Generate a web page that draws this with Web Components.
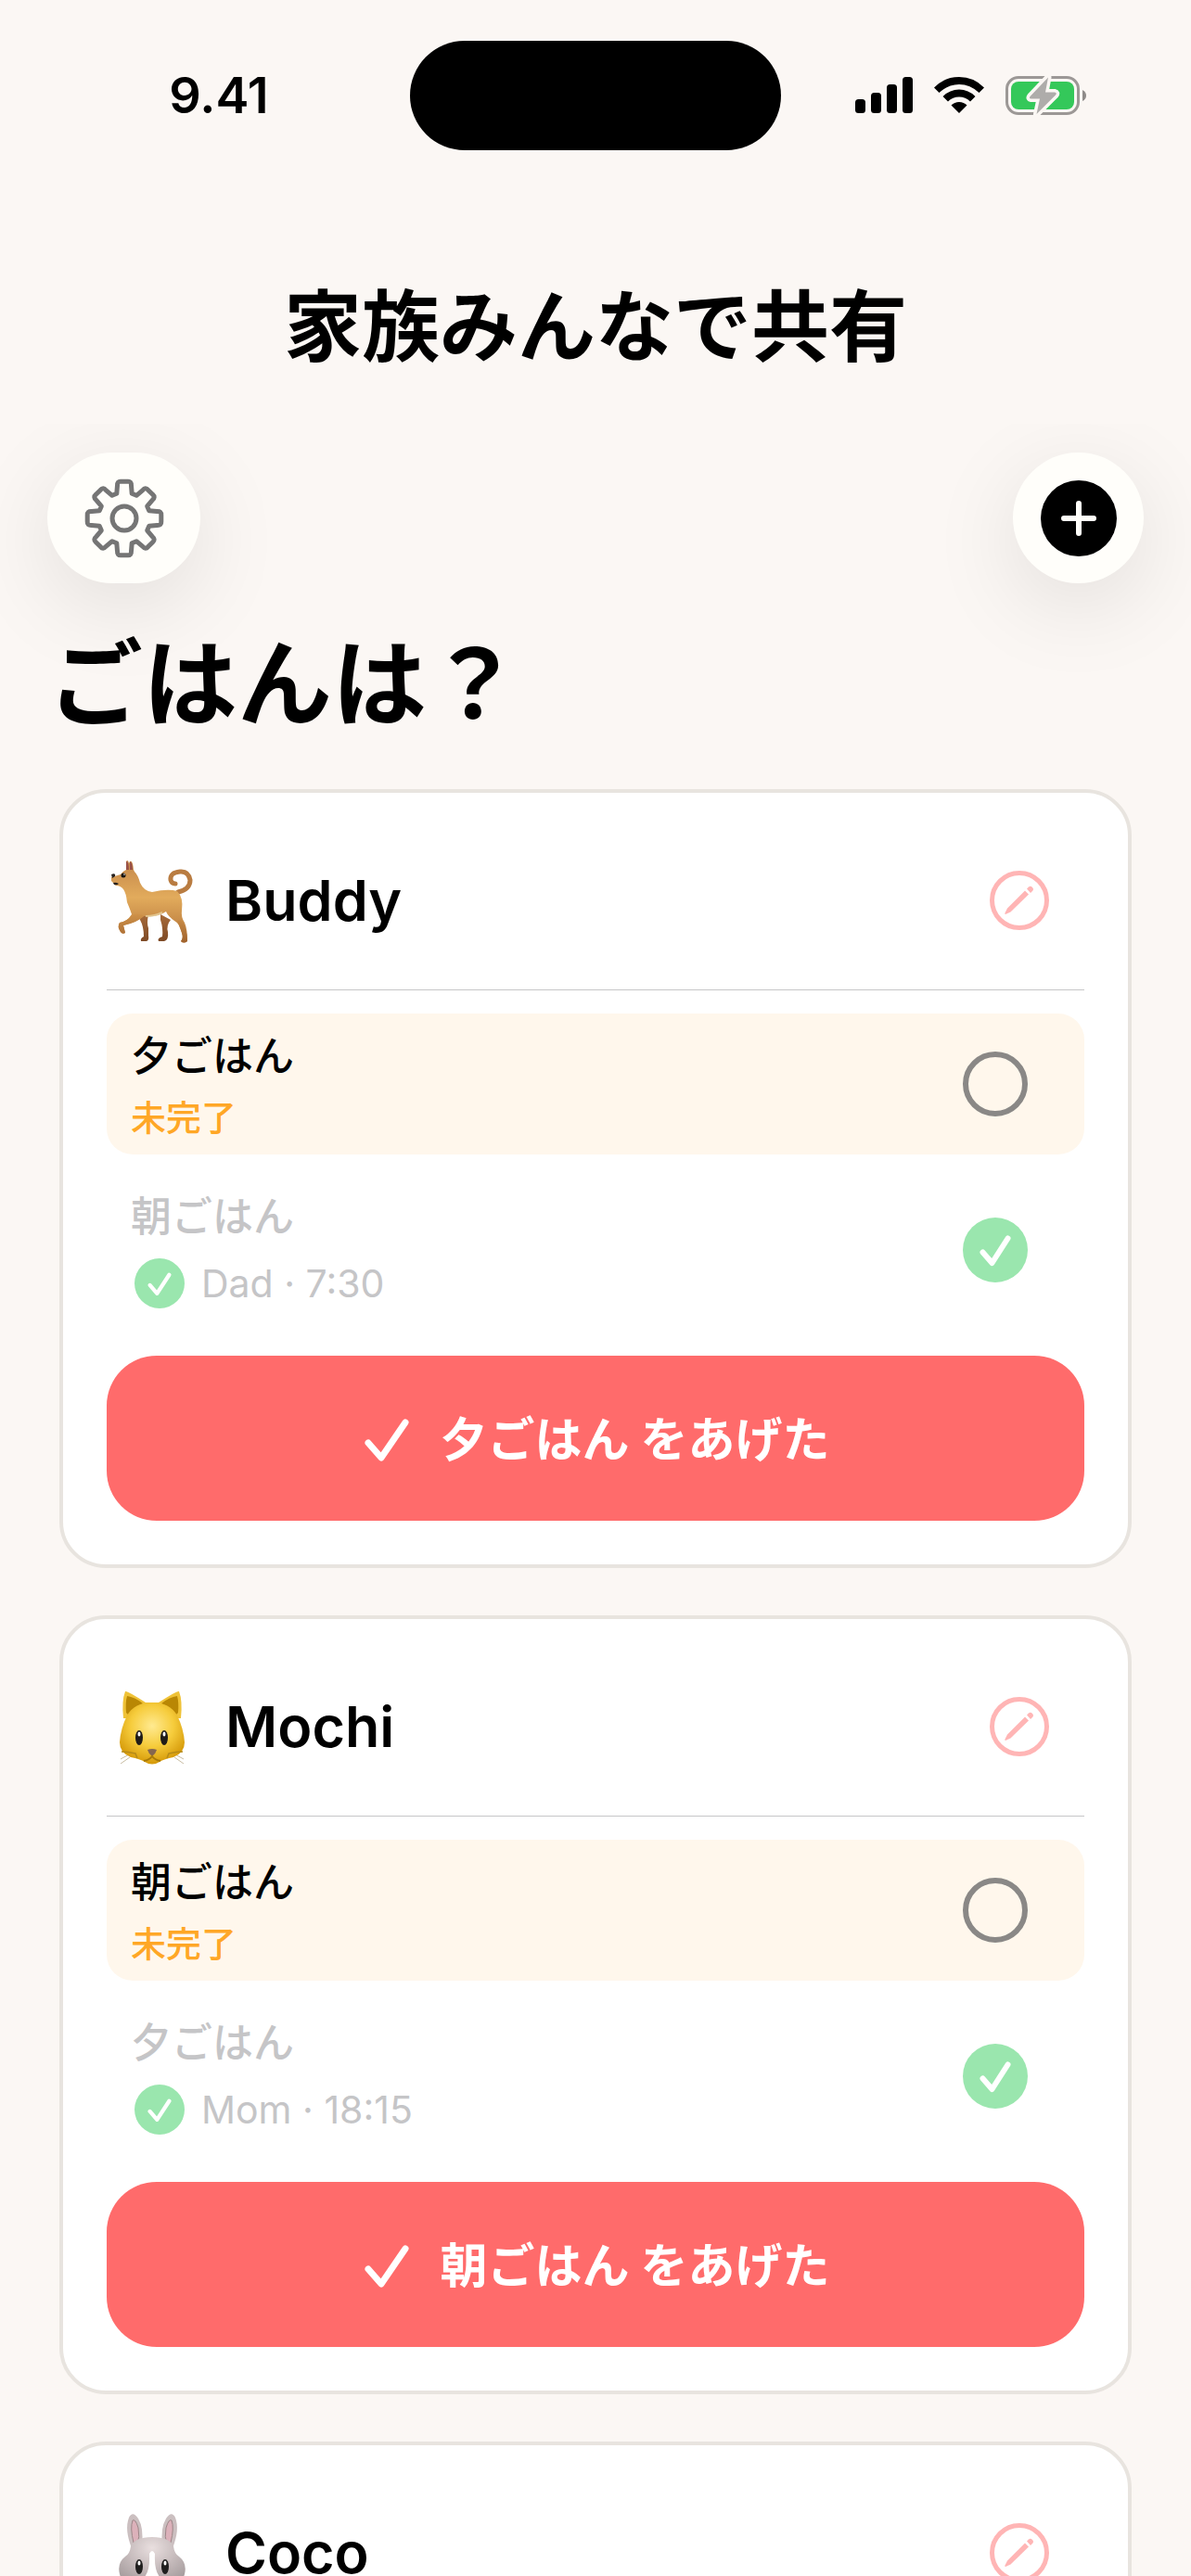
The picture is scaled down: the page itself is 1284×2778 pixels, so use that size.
<!DOCTYPE html>
<html lang="ja">
<head>
<meta charset="utf-8">
<meta name="viewport" content="width=device-width, initial-scale=1">
<title>ごはんは？</title>
<style>
:root {
    --bg: #fbf7f4;
    --coral: #ff6b6b;
    --coral-soft: #ffb5b5;
    --green-soft: #9ae6ae;
    --muted: #c5c5c7;
    --amber: #ffa726;
}
html, body { height: 100%; }
body {
    margin: 0;
    background: var(--bg);
    color: #000;
    font-family: Inter, "Noto Sans CJK JP", sans-serif;
}
</style>
</head>
<body>
<app-screen>
    <status-bar slot="status" time="9.41"></status-bar>
    <span slot="tagline">家族みんなで共有</span>
    <tool-bar></tool-bar>
    <page-title>ごはんは？</page-title>
    <pet-card name="Buddy" due="夕ごはん">
        <pet-icon slot="icon" kind="dog"></pet-icon>
        <meal-row meal="夕ごはん">未完了</meal-row>
        <meal-row meal="朝ごはん" done>Dad · 7:30</meal-row>
    </pet-card>
    <pet-card name="Mochi" due="朝ごはん">
        <pet-icon slot="icon" kind="cat"></pet-icon>
        <meal-row meal="朝ごはん">未完了</meal-row>
        <meal-row meal="夕ごはん" done>Mom · 18:15</meal-row>
    </pet-card>
    <pet-card name="Coco">
        <pet-icon slot="icon" kind="rabbit"></pet-icon>
    </pet-card>
</app-screen>

<script>
{
const define = (name, render) => customElements.define(name, class extends HTMLElement {
    constructor() {
        super();
        this.attachShadow({ mode: 'open' });
    }
    connectedCallback() {
        this.shadowRoot.innerHTML = render(this);
    }
});

// eight teeth around the centre of a 90x90 box
function gearPath() {
    const at = (r, deg) => {
        const a = (deg - 90) * Math.PI / 180;
        return (45 + r * Math.cos(a)).toFixed(1) + ' ' + (45 + r * Math.sin(a)).toFixed(1);
    };
    let d = '';
    for (let t = 0; t < 360; t += 45) {
        d += (t ? 'L' : 'M') + at(28, t - 17)
            + 'L' + at(36, t - 12)
            + 'Q' + at(41, t - 11) + ' ' + at(40, t - 5)
            + 'L' + at(40, t + 5)
            + 'Q' + at(41, t + 11) + ' ' + at(36, t + 12)
            + 'L' + at(28, t + 17);
    }
    return d + 'Z';
}

define('app-screen', () => `
    <style>
        :host { display: flex; flex-direction: column; height: 100%; overflow: hidden; }
        .tagline {
            margin: 141px 0 54px;
            font-size: 84px; line-height: 100px; font-weight: 700; text-align: center;
        }
        main {
            flex: 1; min-height: 0; overflow-y: auto; scrollbar-width: none;
            display: flex; flex-direction: column;
        }
        ::slotted(pet-card) { margin: 0 64px 51px; flex: none; }
    </style>
    <slot name="status"></slot>
    <p class="tagline"><slot name="tagline"></slot></p>
    <main><slot></slot></main>
`);

define('status-bar', el => `
    <style>
        :host { display: grid; grid-template-columns: 1fr 400px 1fr; align-items: center; padding-top: 44px; }
        time { padding-left: 30px; font-size: 54px; line-height: 60px; font-weight: 600; text-align: center; }
        .island { height: 118px; border-radius: 59px; background: #000; }
        .icons { display: flex; align-items: center; justify-content: flex-end; gap: 23px; padding-right: 112px; }
        svg { display: block; }
    </style>
    <time>${el.getAttribute('time')}</time>
    <div class="island"></div>
    <div class="icons">
        <svg width="62" height="40" viewBox="0 0 62 40">
            <rect x="0" y="24" width="11" height="15" rx="3.5"/>
            <rect x="17" y="17" width="11" height="22" rx="3.5"/>
            <rect x="34" y="8" width="11" height="31" rx="3.5"/>
            <rect x="51" y="0" width="11" height="39" rx="3.5"/>
        </svg>
        <svg width="54" height="40" viewBox="0 0 54 40">
            <path d="M0 11.500Q11 0 27 0T54 11.500L48.500 17Q39 8 27 8T5.500 17Z"/>
            <path d="M9.500 21Q17 13.500 27 13.500T44.500 21L39 26.500Q34 21.500 27 21.500T15 26.500Z"/>
            <path d="M18.500 30.500Q22 27 27 27T35.500 30.500L27 39Z"/>
        </svg>
        <svg width="88" height="44" viewBox="0 0 88 44">
            <rect x="1.500" y="2.500" width="77" height="39" rx="12.500" fill="none" stroke="#9c9896" stroke-width="3"/>
            <rect x="6" y="7" width="68" height="30" rx="8" fill="#34c85a"/>
            <path d="M83 16Q87 18 87 22T83 28Z" fill="#8f8c8a"/>
            <path d="M46 2.500L26.500 23Q25 25 27.500 25.500H37L33.500 42L54 21.500Q56 19 53 18.500H43Z" fill="#aeacaa" stroke="#fbf7f4" stroke-width="7" stroke-linejoin="round" paint-order="stroke"/>
        </svg>
    </div>
`);

define('tool-bar', () => `
    <style>
        :host { display: flex; justify-content: space-between; padding: 31px 51px 0; }
        button {
            display: grid; place-items: center;
            width: 141px; height: 141px; padding: 0; border: 0; border-radius: 71px;
            background: #fffefa; box-shadow: 0 24px 96px rgba(0, 0, 0, .1); cursor: pointer;
        }
        .settings { width: 165px; }
    </style>
    <button class="settings" type="button" aria-label="設定">
        <svg width="90" height="90" viewBox="0 0 90 90" fill="none" stroke="#757575" stroke-width="5" stroke-linejoin="round">
            <path d="${gearPath()}"/>
            <circle cx="45" cy="45" r="13"/>
        </svg>
    </button>
    <button type="button" aria-label="追加">
        <svg width="82" height="82" viewBox="0 0 82 82">
            <circle cx="41" cy="41" r="41"/>
            <path d="M41 25V57M25 41H57" stroke="#fffefa" stroke-width="6" stroke-linecap="round"/>
        </svg>
    </button>
`);

define('page-title', () => `
    <style>
        :host { display: block; padding: 49px 52px 53px; }
        h1 { margin: 0; font-size: 102px; line-height: 120px; font-weight: 700; }
    </style>
    <h1><slot></slot></h1>
`);

define('pet-card', el => {
    const due = el.getAttribute('due');
    return `
    <style>
        :host {
            display: block; padding: 47px; border: 4px solid #e8e4df; border-radius: 50px;
            background: #fff;
        }
        header {
            display: flex; align-items: center; gap: 30px; height: 138px;
            padding: 0 38px 27px 0; border-bottom: 1px solid #c6c6c8;
        }
        h2 { flex: 1; margin: 0; font-size: 61px; line-height: 80px; font-weight: 600; }
        button { border: 0; padding: 0; background: none; font: inherit; cursor: pointer; }
        svg { display: block; }
        .meals { display: grid; gap: 21px; padding: 25px 0 32px; }
        .feed {
            display: flex; align-items: center; justify-content: center; gap: 33px;
            width: 100%; height: 178px; padding: 4px 0 0 4px; border-radius: 54px;
            background: var(--coral); color: #fff;
            font-size: 51px; line-height: 60px; font-weight: 700;
        }
    </style>
    <header>
        <slot name="icon"></slot>
        <h2>${el.getAttribute('name')}</h2>
        <button type="button" aria-label="編集">
            <svg width="64" height="64" viewBox="0 0 64 64" fill="#ffb5b5">
                <circle cx="32" cy="32" r="29.500" fill="none" stroke="#ffb5b5" stroke-width="5"/>
                <path d="M38 21.500L42 25.500L22.500 44.500L17 47Q16 47 16.500 45.500L19 40.500Z"/>
                <path d="M40 19.500L42 17.500Q44 16 46 18Q48 20 46 22L44 24Z"/>
            </svg>
        </button>
    </header>
    <div class="meals"><slot></slot></div>
    ${due ? `<button class="feed" type="button">
        <svg width="48" height="48" viewBox="0 0 48 48" fill="none" stroke="#fff" stroke-width="7" stroke-linecap="round" stroke-linejoin="round"><path d="M4 27L18 43L44 5"/></svg>
        <span>${due} をあげた</span>
    </button>` : ''}
`;
});

define('meal-row', el => {
    const done = el.hasAttribute('done');
    return `
    <style>
        :host {
            display: flex; align-items: center; justify-content: space-between;
            padding: 16px 61px 16px 26px; border-radius: 28px; background: #fff7ec;
        }
        :host([done]) { background: none; color: var(--muted); }
        .text { display: grid; gap: 12px; }
        label { font-size: 44px; line-height: 60px; font-weight: 500; }
        .state { display: flex; align-items: center; gap: 18px; font-size: 38px; line-height: 48px; font-weight: 500; color: var(--amber); }
        :host([done]) .state { padding-left: 4px; font-size: 41px; line-height: 60px; font-weight: 400; color: inherit; }
        .tick { display: grid; place-items: center; }
        .tick > * { grid-area: 1 / 1; }
        input {
            appearance: none; box-sizing: border-box; width: 70px; height: 70px; margin: 0;
            border: 6px solid #8a8886; border-radius: 50%; cursor: pointer;
        }
        input:checked { border: 0; background: var(--green-soft); }
        svg { display: block; pointer-events: none; }
        input:not(:checked) + svg { visibility: hidden; }
    </style>
    <div class="text">
        <label for="tick">${el.getAttribute('meal')}</label>
        <div class="state">
            ${done ? `<svg width="54" height="54" viewBox="0 0 70 70">
                <circle cx="35" cy="35" r="35" fill="#9ae6ae"/>
                <path d="M21.500 37.500L31.500 49L48.500 23" fill="none" stroke="#fff" stroke-width="5.500" stroke-linecap="round" stroke-linejoin="round"/>
            </svg>` : ''}
            <span><slot></slot></span>
        </div>
    </div>
    <div class="tick">
        <input id="tick" type="checkbox" ${done ? 'checked' : ''}>
        <svg width="70" height="70" viewBox="0 0 70 70" fill="none" stroke="#fff" stroke-width="6" stroke-linecap="round" stroke-linejoin="round"><path d="M21.500 37.500L31.500 49L48.500 22.500"/></svg>
    </div>
`;
});

const pets = {
    dog: `
        <defs>
            <linearGradient id="coat" x1="0" y1="0" x2="0" y2="1">
                <stop offset="0" stop-color="#c4874a"/><stop offset=".45" stop-color="#e2ab5c"/><stop offset="1" stop-color="#b07036"/>
            </linearGradient>
            <linearGradient id="leg" x1="0" y1="0" x2="0" y2="1">
                <stop offset="0" stop-color="#a76b3a"/><stop offset="1" stop-color="#7e4a26"/>
            </linearGradient>
            <linearGradient id="front" x1="0" y1="0" x2="0" y2="1">
                <stop offset="0" stop-color="#cf9249"/><stop offset="1" stop-color="#a0622d"/>
            </linearGradient>
        </defs>
        <path d="M36 62L45 60Q43 70 45 75V83Q46 88 43 89H37Q36 86 40 84Q40 73 36 66ZM58 60L69 66Q64 72 66 79Q67 88 62 89H56Q54 86 60 84Q61 75 58 66Z" fill="url(#leg)"/>
        <path d="M77 36Q90 33 90 23Q88 13 79 14Q68 15 69 23Q70 27 74 27" fill="none" stroke="#b97c41" stroke-width="5" stroke-linecap="round"/>
        <path d="M21 3Q23 0 24 5L25 3Q28 1 29 12L30 14Q34 18 36 26Q40 35 49 36Q66 32 76 35Q83 42 81 56Q80 63 84 69Q87 76 87 89Q83 92 80 89Q83 86 81 80Q79 70 73 67Q66 62 64 57Q54 64 40 62Q33 68 18 72L20 80Q17 82 15 79Q11 73 14 69Q22 68 27 60Q25 54 22 47Q21 37 18 33Q15 29 10 29L5 24L5 20L15 17Q18 13 21 12Z" fill="url(#coat)"/>
        <path d="M80 66Q87 75 87 89Q83 92 80 89Q83 86 81 80L76 67ZM28 60Q38 59 40 62Q33 69 18 72L20 80Q17 82 15 79Q11 73 14 69Q22 68 28 60Z" fill="url(#front)"/>
        <path d="M21 3Q24 3 24 12H21ZM25 3Q28 4 28 12H25Z" fill="#9a5248"/>
        <path d="M5 17Q10 15 9 19L6 21ZM7 26Q10 25 13 27Q11 29 8 28Z" fill="#26221f"/>
        <circle cx="18" cy="18" r="2.500" fill="#181512"/><circle cx="19" cy="17" r=".8" fill="#fff"/>
        <path d="M42 62Q52 62 60 58" fill="none" stroke="#ead9a8" stroke-width="2" opacity=".7"/>`,
    cat: `
        <defs>
            <radialGradient id="face" cx=".5" cy=".38" r=".6">
                <stop offset="0" stop-color="#ffea91"/><stop offset=".55" stop-color="#f6cc3c"/><stop offset="1" stop-color="#d79c0b"/>
            </radialGradient>
        </defs>
        <path d="M15 80Q24 75 30 72M15 85L25 78M83 80Q74 75 68 72M83 85L73 78" fill="none" stroke="#c9bda3" stroke-width="1"/>
        <path d="M18 36Q16 17 20 7Q22 6 42 19H56Q76 6 78 7Q82 17 80 36Z" fill="#efc237"/>
        <path d="M21 30Q20 19 22 12Q30 13 39 20Q30 24 23 32ZM77 30Q78 19 76 12Q68 13 59 20Q68 24 75 32Z" fill="#b98704"/>
        <path d="M49 19Q68 19 76 33Q83 47 84 62Q84 73 72 78Q62 80 57 83Q49 88 41 83Q36 80 26 78Q14 73 14 62Q15 47 22 33Q30 19 49 19Z" fill="url(#face)"/>
        <path d="M16 72Q23 72 31 74L33 79M82 72Q75 72 67 74L65 79" fill="none" stroke="#b58a19" stroke-width="1.500"/>
        <ellipse cx="35" cy="57" rx="4" ry="8" fill="#201c18"/><ellipse cx="62" cy="57" rx="4" ry="8" fill="#201c18"/>
        <ellipse cx="35" cy="53" rx="1.500" ry="2.500" fill="#fff"/><ellipse cx="62" cy="53" rx="1.500" ry="2.500" fill="#fff"/>
        <path d="M44 70Q49 68 54 70Q53 74 49 77Q45 74 44 70Z" fill="#856650"/>
        <path d="M40 82Q46 81 49 77Q52 81 58 82" fill="none" stroke="#a87908" stroke-width="2"/>`,
    rabbit: `
        <defs>
            <radialGradient id="fur" cx=".5" cy=".2" r=".75">
                <stop offset="0" stop-color="#e9dfdf"/><stop offset=".5" stop-color="#c6bbbc"/><stop offset="1" stop-color="#a19899"/>
            </radialGradient>
        </defs>
        <path d="M27 40Q19 20 24 7Q28 -1 34 8Q40 18 38 36ZM71 40Q79 20 74 7Q70 -1 64 8Q58 18 60 36Z" fill="#cbbfc0"/>
        <path d="M29 34Q25 18 28 10Q31 8 34 18Q36 28 33 36ZM69 34Q73 18 70 10Q67 8 64 18Q62 28 65 36Z" fill="#dcb1ba" stroke="#9d8789" stroke-width="1"/>
        <path d="M49 28Q68 28 72 38Q73 46 78 49Q87 56 84 68Q80 84 49 87Q18 84 14 68Q11 56 20 49Q25 46 26 38Q30 28 49 28Z" fill="url(#fur)"/>
        <path d="M46 46Q49 40 52 46Q51 65 58 72L49 82L40 72Q47 65 46 46Z" fill="#fff"/>
        <ellipse cx="35" cy="60" rx="4" ry="8" fill="#201f1f"/><ellipse cx="63" cy="60" rx="4" ry="8" fill="#201f1f"/>
        <ellipse cx="35" cy="56" rx="1.500" ry="2.500" fill="#fff"/><ellipse cx="63" cy="56" rx="1.500" ry="2.500" fill="#fff"/>`,
};

define('pet-icon', el => `
    <style>
        :host { display: block; }
        svg { display: block; }
    </style>
    <svg width="98" height="90" viewBox="0 0 98 90" overflow="visible" aria-hidden="true">${pets[el.getAttribute('kind')]}</svg>
`);
}
</script>
</body>
</html>
